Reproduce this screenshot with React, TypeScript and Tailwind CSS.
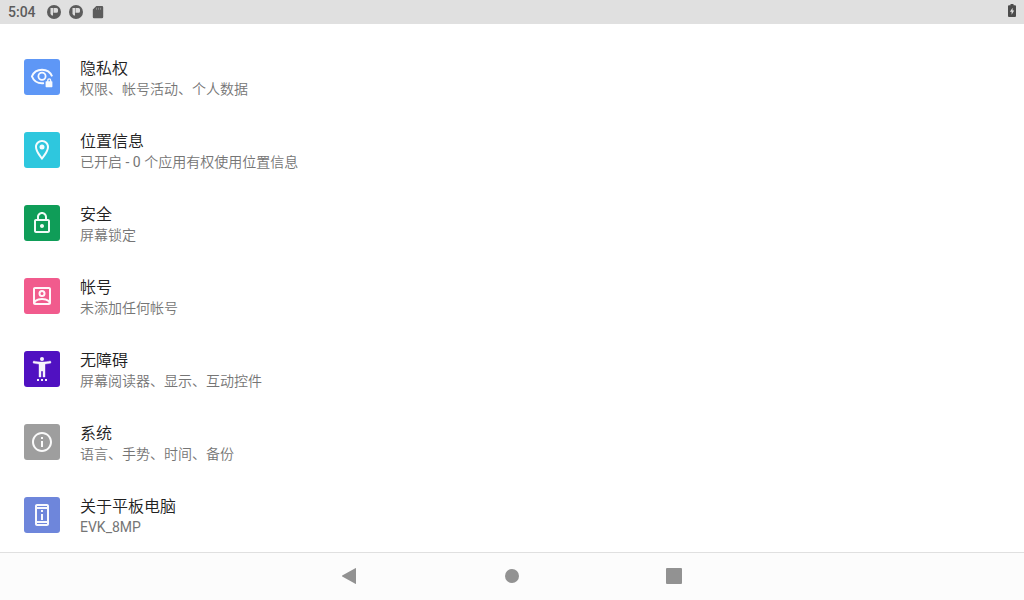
import type { ReactNode } from 'react';

const Glyph = ({ children }: { children: ReactNode }) => (
  <svg viewBox="0 0 24 24" className="size-6" fill="currentColor" aria-hidden="true">
    {children}
  </svg>
);

const PrivacyIcon = () => (
  <Glyph>
    <path
      d="M14 18.1C13.4 18.2 12.7 18.3 12 18.3C7.4 18.3 3.6 15.4 1.9 11.3C3.6 7.2 7.4 4.7 12 4.7C16.6 4.7 20.4 7.2 22.1 11.3"
      fill="none"
      stroke="currentColor"
      strokeWidth="1.9"
    />
    <circle cx="12" cy="11.3" r="3.6" fill="none" stroke="currentColor" strokeWidth="1.8" />
    <path
      fillRule="evenodd"
      d="M16.2 16.2h.9v-.9a2.1 2.1 0 0 1 4.2 0v.9h.5a.6.6 0 0 1 .6.6v4.8a.6.6 0 0 1-.6.6h-5.6a.6.6 0 0 1-.6-.6v-4.8a.6.6 0 0 1 .6-.6zM18.5 16.2h1.400v-.9a.7.7 0 0 0-1.400 0z"
    />
  </Glyph>
);

const LocationIcon = () => (
  <Glyph>
    <path d="M12 2C8.13 2 5 5.13 5 9c0 5.25 7 13 7 13s7-7.75 7-13c0-3.87-3.13-7-7-7zM7 9c0-2.76 2.24-5 5-5s5 2.24 5 5c0 2.88-2.88 7.19-5 9.88C9.92 16.21 7 11.85 7 9z" />
    <circle cx="12" cy="9" r="2.5" />
  </Glyph>
);

const LockIcon = () => (
  <Glyph>
    <path d="M18 8h-1V6c0-2.76-2.24-5-5-5S7 3.24 7 6v2H6c-1.1 0-2 .9-2 2v10c0 1.1.9 2 2 2h12c1.1 0 2-.9 2-2V10c0-1.1-.9-2-2-2zM9 6c0-1.66 1.34-3 3-3s3 1.34 3 3v2H9V6zm9 14H6V10h12v10zm-6-3c1.1 0 2-.9 2-2s-.9-2-2-2-2 .9-2 2 .9 2 2 2z" />
  </Glyph>
);

const AccountIcon = () => (
  <Glyph>
    <path
      fillRule="evenodd"
      d="M19 3H5c-1.110 0-2 .9-2 2v14c0 1.100.89 2 2 2h14c1.100 0 2-.9 2-2V5c0-1.100-.9-2-2-2zM5 5h14v10.900C17.100 14.600 14.700 13.900 12 13.900S6.900 14.600 5 15.900zM5.600 19v-1C7.300 16.600 9.500 15.900 12 15.900s4.700.7 6.400 2.100v1z"
    />
    <circle cx="12" cy="9.500" r="2.500" fill="none" stroke="currentColor" strokeWidth="2" />
  </Glyph>
);

const AccessibilityIcon = () => (
  <Glyph>
    <path d="M20.500 4c-2.610.7-5.670 1-8.500 1s-5.890-.3-8.500-1L3 6c1.860.5 4 .83 6 1v13h2v-6h2v6h2V7c2-.17 4.140-.5 6-1z" stroke="currentColor" strokeWidth=".4" />
    <circle cx="12" cy="2" r="2" />
    <path d="M7 22h2v2H7zM11 22h2v2h-2zM15 22h2v2h-2z" />
  </Glyph>
);

const InfoIcon = () => (
  <Glyph>
    <path d="M11 7h2v2h-2zM11 11h2v6h-2zM12 2C6.480 2 2 6.480 2 12s4.480 10 10 10 10-4.480 10-10S17.520 2 12 2zm0 18c-4.410 0-8-3.590-8-8s3.590-8 8-8 8 3.590 8 8-3.590 8-8 8z" />
  </Glyph>
);

const DeviceIcon = () => (
  <Glyph>
    <path d="M11 7h2v2h-2zM11 11h2v6h-2zM17 1H7c-1.100 0-2 .9-2 2v18c0 1.100.9 2 2 2h10c1.100 0 2-.9 2-2V3c0-1.100-.9-2-2-2zm0 20H7v-1h10v1zm0-3H7V6h10v12zm0-14H7V3h10v1z" />
  </Glyph>
);

const Latin = ({ children }: { children: ReactNode }) => <span className="font-normal">{children}</span>;

const items = [
  { title: '隐私权', summary: '权限、帐号活动、个人数据', color: 'bg-[#5e97f6]', icon: <PrivacyIcon /> },
  {
    title: '位置信息',
    summary: (
      <>
        已开启<Latin> - 0 </Latin>个应用有权使用位置信息
      </>
    ),
    color: 'bg-[#2ec7de]',
    icon: <LocationIcon />,
  },
  { title: '安全', summary: '屏幕锁定', color: 'bg-[#0f9d58]', icon: <LockIcon /> },
  { title: '帐号', summary: '未添加任何帐号', color: 'bg-[#f15b8d]', icon: <AccountIcon /> },
  { title: '无障碍', summary: '屏幕阅读器、显示、互动控件', color: 'bg-[#5011c1]', icon: <AccessibilityIcon /> },
  { title: '系统', summary: '语言、手势、时间、备份', color: 'bg-[#9e9e9e]', icon: <InfoIcon /> },
  { title: '关于平板电脑', summary: <Latin>EVK_8MP</Latin>, color: 'bg-[#6e86db]', icon: <DeviceIcon /> },
];

const NotificationIcon = () => (
  <svg viewBox="0 0 14 14" className="size-3.5" aria-hidden="true">
    <circle cx="7" cy="7" r="7" fill="#5c5c5c" />
    <path d="M3.500 3H6v7.500H4.800L3.500 9zM7 3h2.500A1.500 1.500 0 0 1 11 4.500v1.700A1.500 1.500 0 0 1 9.500 7.700H7z" fill="#dcdcdc" />
    <path d="M6 3h1v4.700H6z" fill="#a0a0a0" />
  </svg>
);

const StatusBar = () => (
  <header className="flex h-6 items-center justify-between bg-[#e0e0e0] px-2 text-[#5c5c5c]">
    <div className="flex items-center gap-2">
      <time className="mr-[3px] text-sm font-medium">5:04</time>
      <NotificationIcon />
      <NotificationIcon />
      <svg viewBox="0 0 14 14" className="size-3.5" fill="currentColor" aria-hidden="true">
        <path d="M5.300 1H11a1.200 1.200 0 0 1 1.200 1.200v9.800a1.200 1.200 0 0 1-1.200 1.200H3A1.200 1.200 0 0 1 1.800 12V4.500z" />
        <path d="M5 2.800h1v2H5zM7 2.800h1v2H7zM9 2.800h1v2H9z" fill="#8a8a8a" />
      </svg>
    </div>
    <svg viewBox="0 0 8 16" className="h-4 w-2" aria-hidden="true">
      <path d="M2.500 0h3v1.200H7a1 1 0 0 1 1 1V12a1 1 0 0 1-1 1H1a1 1 0 0 1-1-1V2.200a1 1 0 0 1 1-1h1.500z" fill="#4c4c4c" />
      <path d="M4.600 3.800 1.900 7.800h1.700v3l2.600-4.200H4.600z" fill="#e0e0e0" />
    </svg>
  </header>
);

const NavigationBar = () => (
  <nav className="mt-auto flex h-12 justify-center gap-[82px] border-t border-[#e0e0e0] bg-[#fcfcfc] pb-px text-[#929292]">
    <button type="button" aria-label="返回" className="grid w-20 place-items-center">
      <svg viewBox="0 0 18 18" className="size-[18px]" fill="currentColor" aria-hidden="true">
        <path d="M14.300 1.200Q15 .8 15 1.600v14.800q0 .8-.7.4L1.200 9.400Q.6 9 1.200 8.600z" />
      </svg>
    </button>
    <button type="button" aria-label="主屏幕" className="grid w-20 place-items-center">
      <span className="size-3.5 rounded-full bg-current" />
    </button>
    <button type="button" aria-label="概览" className="grid w-20 place-items-center">
      <span className="size-4 rounded-[1px] bg-current" />
    </button>
  </nav>
);

export default function App() {
  return (
    <div className="flex min-h-screen flex-col bg-white font-[Roboto,'Noto_Sans_CJK_SC',sans-serif]">
      <StatusBar />
      <main className="pt-4">
        <ul>
          {items.map((item) => (
            <li key={item.title}>
              <a href="#" className="flex h-[73px] items-center gap-5 px-6">
                <span className={`grid size-9 shrink-0 place-items-center rounded-[3px] text-white/95 ${item.color}`}>
                  {item.icon}
                </span>
                <span className="flex flex-col pt-1">
                  <span className="text-base leading-5 font-[350] text-[#212121]">{item.title}</span>
                  <span className="text-sm leading-5 font-[350] text-[#757575]">{item.summary}</span>
                </span>
              </a>
            </li>
          ))}
        </ul>
      </main>
      <NavigationBar />
    </div>
  );
}
